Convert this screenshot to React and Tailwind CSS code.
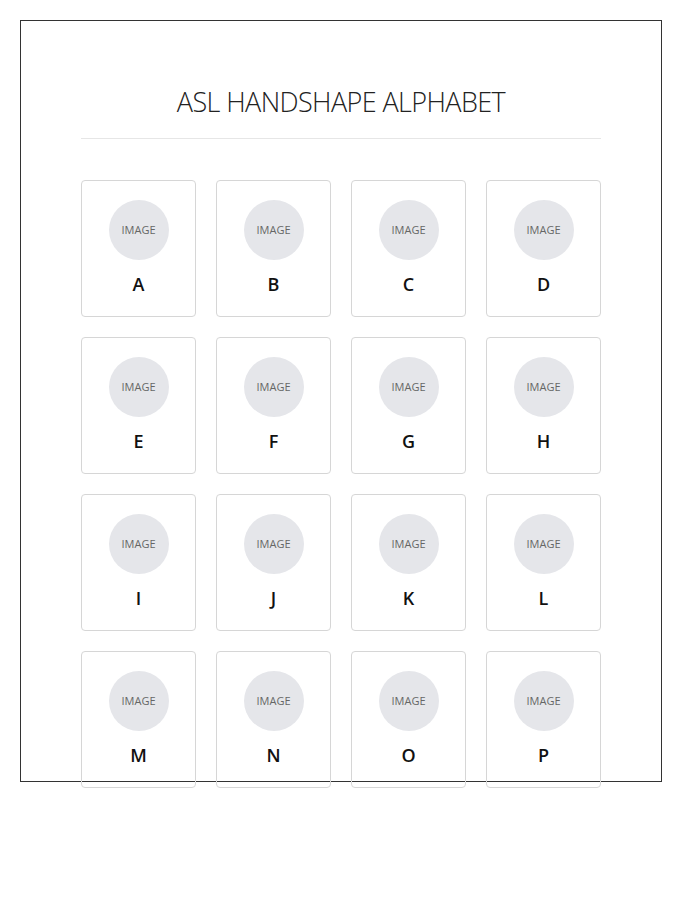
const LETTERS = 'ABCDEFGHIJKLMNOP'.split('')

function SignCard({ letter }) {
  return (
    <div className="flex h-[137px] flex-col items-center rounded-[4px] border border-[#d6d6d6] pt-[19px]">
      <div className="flex h-[60px] w-[60px] items-center justify-center rounded-full bg-[#e5e6ea] text-[11px] text-[#666]">
        IMAGE
      </div>
      <div className="mt-[14px] text-[18px] font-semibold leading-[20px] text-[#111]">{letter}</div>
    </div>
  )
}

export default function App() {
  return (
    <div className="min-h-[900px] bg-white pl-[20px] pt-[20px]" style={{ fontFamily: '"Open Sans", "Noto Sans", sans-serif' }}>
      <div className="h-[762px] w-[642px] border border-[#333] px-[60px]">
        <h1 className="pt-[65px] text-center text-[27px] font-light leading-[32px] tracking-[-0.6px] text-[#222]">
          ASL HANDSHAPE ALPHABET
        </h1>
        <div className="mt-[20px] h-px bg-[#e6e6e6]" />
        <div className="mt-[41px] grid grid-cols-4 gap-x-[20px] gap-y-[20px]">
          {LETTERS.map((l) => (
            <SignCard key={l} letter={l} />
          ))}
        </div>
      </div>
    </div>
  )
}
